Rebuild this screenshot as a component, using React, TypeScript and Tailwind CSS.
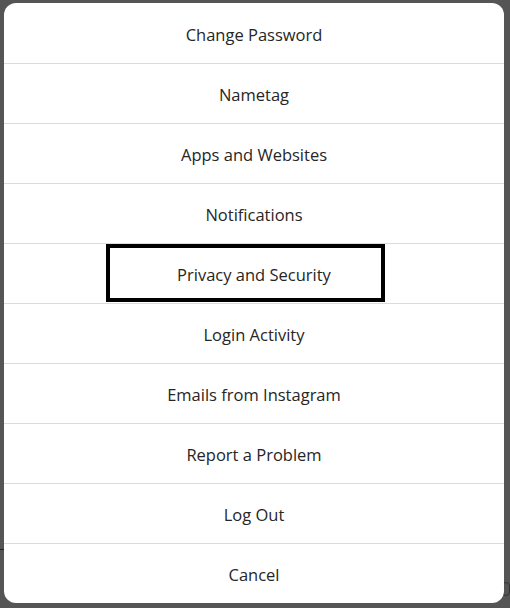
import React from 'react';

const items = [
  'Change Password',
  'Nametag',
  'Apps and Websites',
  'Notifications',
  'Privacy and Security',
  'Login Activity',
  'Emails from Instagram',
  'Report a Problem',
  'Log Out',
  'Cancel',
];

const App: React.FC = () => {
  return (
    <div className="relative w-[510px] h-[608px] bg-[#555555] overflow-hidden" style={{ fontFamily: '"Open Sans", "Noto Sans", sans-serif' }}>
      {/* page peeking behind the overlay */}
      <div className="absolute left-0 top-[549px] w-[6px] h-px bg-[#222]" />
      <div className="absolute right-0 top-[582px] w-[8px] h-[14px] rounded-full border border-[#333]" />

      <div className="absolute left-[4px] top-[3px] w-[500px] bg-white rounded-[12px] overflow-hidden">
        {items.map((label, i) => (
          <div
            key={label}
            className={`relative h-[60px] flex items-center justify-center pt-[4px] ${i > 0 ? 'border-t border-[#dbdbdb]' : ''}`}
          >
            <span className="text-[16.5px] text-[#262626]">{label}</span>
            {label === 'Privacy and Security' && (
              <div className="absolute left-[102px] top-0 w-[279px] h-[58px] border-4 border-black" />
            )}
          </div>
        ))}
      </div>
    </div>
  );
};

export default App;
